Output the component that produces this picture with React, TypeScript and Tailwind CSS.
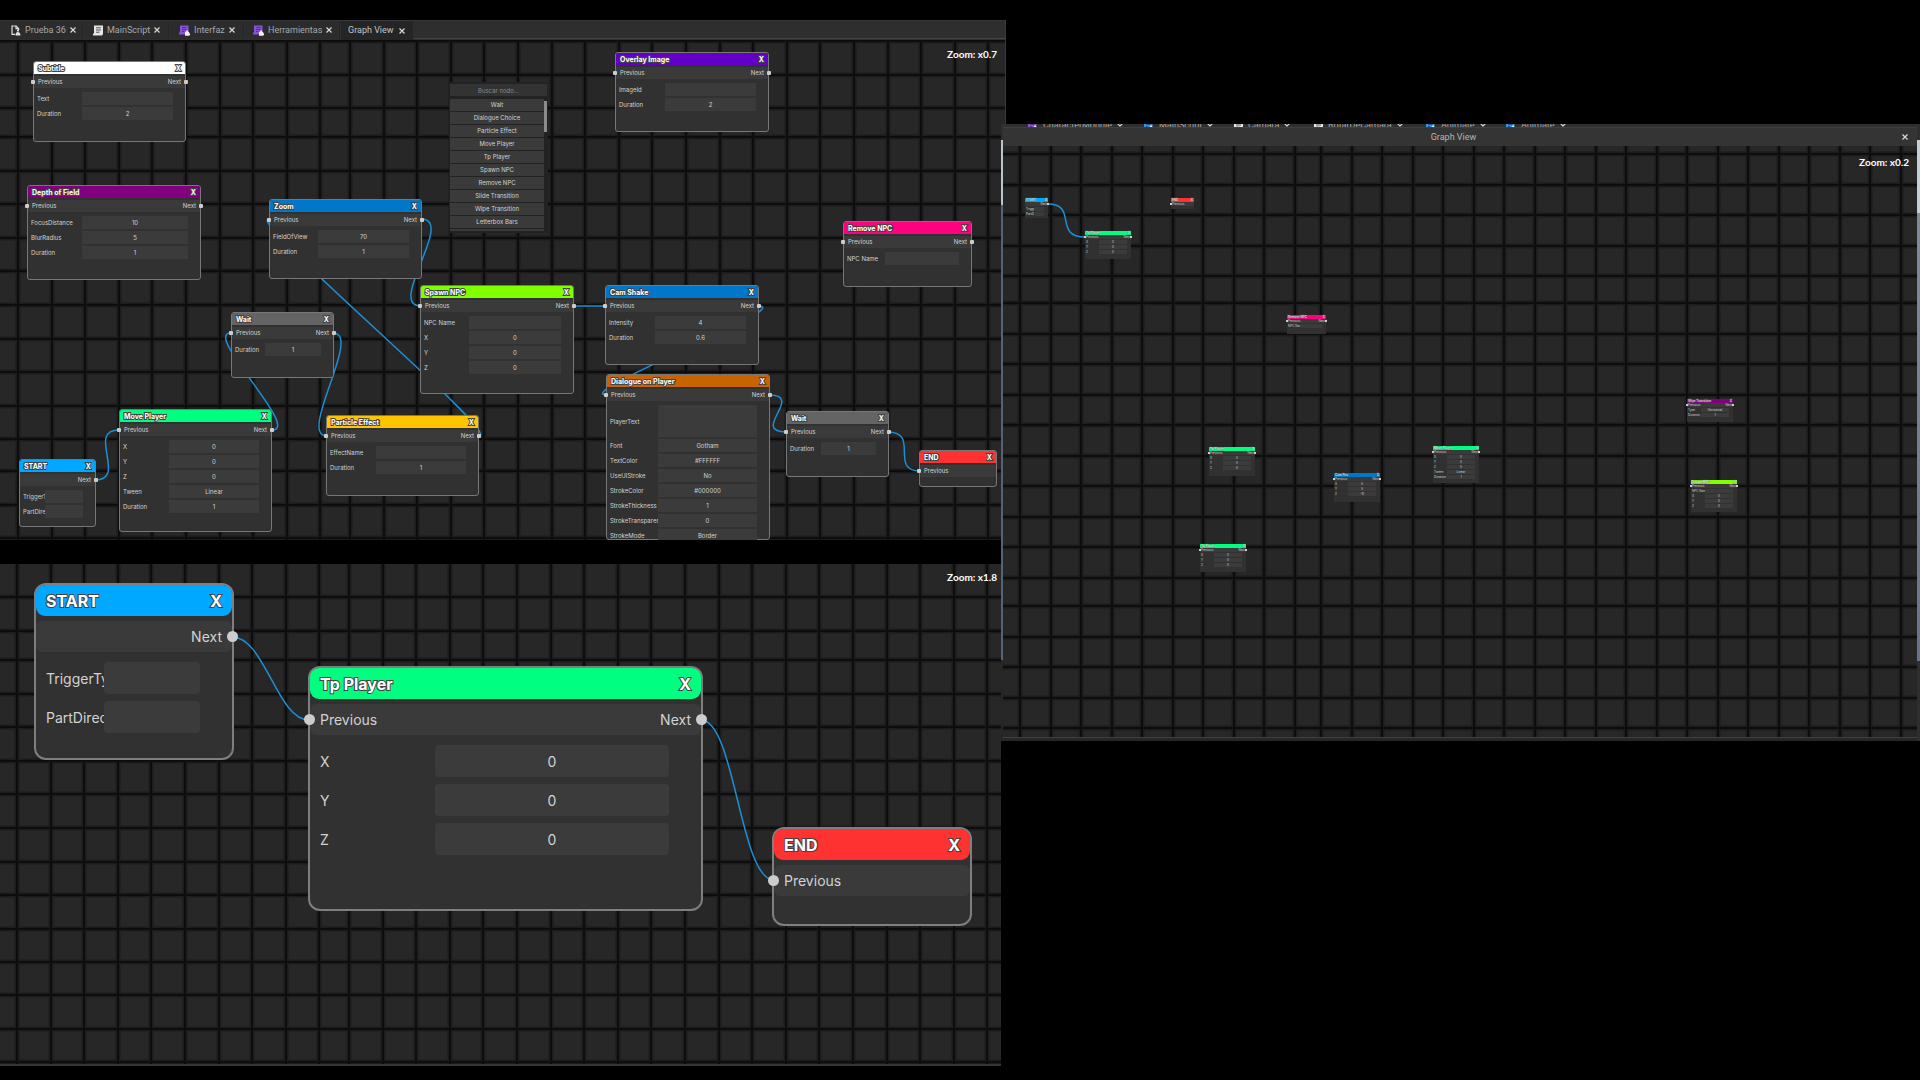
import React, { useId } from "react";

type Size = "xs" | "sm" | "lg";
type Field = { label: string; value?: string; tall?: boolean };
type NodeData = {
  title: string;
  color: string;
  x: number;
  y: number;
  w: number;
  h: number;
  labelW: number;
  prev?: boolean;
  next?: boolean;
  fields: Field[];
};
type Run = [start: number, pitch: number, count: number];

const styles = {
  xs: {
    node: "",
    header: "h-[4px] pl-px pr-px text-[3px] text-[#ffffffb0]",
    stroke: "[-webkit-text-stroke:1px_#55606066]",
    ports: "h-[4px] px-px text-[3px]",
    dot: "size-[2px] top-[1px]",
    dotL: "-left-px",
    dotR: "-right-px",
    fields: "mt-[1px] gap-[1px] pl-px pr-[4px] text-[3px]",
    row: "h-[4px]",
    tall: "h-[8px]",
    input: "",
  },
  sm: {
    node: "border border-[#777777] rounded-[3px]",
    header: "h-[12px] rounded-t-[2px] px-[4px] text-[7px] text-white",
    stroke: "[-webkit-text-stroke:2px_#444444]",
    ports: "mt-[2px] h-[12px] px-[4px] text-[6px]",
    dot: "size-[4px] top-[4px] rounded-[1px]",
    dotL: "-left-[3px]",
    dotR: "-right-[3px]",
    fields: "mt-[4px] gap-[2px] pl-[3px] pr-[12px] text-[6px]",
    row: "h-[13px]",
    tall: "h-[32px]",
    input: "",
  },
  lg: {
    node: "border-2 border-[#7f7f7f] rounded-[12px]",
    header: "h-[31px] rounded-[9px] px-[10px] text-[16px] text-white",
    stroke: "[-webkit-text-stroke:2px_#444444]",
    ports: "mt-[5px] h-[31px] rounded-[6px] px-[10px] text-[14px]",
    dot: "size-[11px] top-[10px] rounded-full",
    dotL: "-left-[6px]",
    dotR: "-right-[6px]",
    fields: "mt-[10px] gap-[7px] pl-[10px] pr-[32px] text-[14px]",
    row: "h-[32px]",
    tall: "h-[64px]",
    input: "rounded-[4px]",
  },
};

function GraphNode({ node, size }: { node: NodeData; size: Size }) {
  const s = styles[size];
  const id = useId();
  return (
    <article
      className={`absolute bg-[#313131] ${s.node}`}
      style={{ left: node.x, top: node.y, width: node.w, height: node.h }}
    >
      <header
        className={`flex items-center justify-between font-bold leading-none [paint-order:stroke_fill] ${s.header} ${s.stroke}`}
        style={{ backgroundColor: node.color }}
      >
        <h2 className="whitespace-nowrap">{node.title}</h2>
        <button type="button" aria-label={`Close ${node.title}`} className="leading-none">
          X
        </button>
      </header>
      <div className={`relative flex items-center justify-between bg-[#3a3a3a] leading-none text-[#d2d2d2] ${s.ports}`}>
        {node.prev && <span className={`absolute bg-[#cccccc] ${s.dot} ${s.dotL}`} />}
        <span>{node.prev ? "Previous" : ""}</span>
        <span>{node.next ? "Next" : ""}</span>
        {node.next && <span className={`absolute bg-[#cccccc] ${s.dot} ${s.dotR}`} />}
      </div>
      <div className={`flex flex-col leading-none text-[#d2d2d2] ${s.fields}`}>
        {node.fields.map((f) => (
          <div key={f.label} className={`flex items-center ${f.tall ? s.tall : s.row}`}>
            <label
              htmlFor={id + f.label}
              className="shrink-0 overflow-hidden whitespace-nowrap leading-normal"
              style={{ width: node.labelW }}
            >
              {f.label}
            </label>
            {f.tall ? (
              <textarea
                id={id + f.label}
                className={`h-full w-0 min-w-0 flex-1 resize-none bg-[#3b3b3b] ${s.input}`}
              />
            ) : (
              <input
                id={id + f.label}
                defaultValue={f.value}
                className={`h-full w-0 min-w-0 flex-1 bg-[#3b3b3b] text-center ${s.input}`}
              />
            )}
          </div>
        ))}
      </div>
    </article>
  );
}

function expand(runs: Run[]) {
  return runs.flatMap(([start, pitch, count]) =>
    Array.from({ length: count }, (_, i) => Math.round(start + pitch * i)),
  );
}

function Grid({ cols, rows, wires, wireWidth }: { cols: Run[]; rows: Run[]; wires: string[]; wireWidth: number }) {
  const lines = [
    ...expand(cols).map((x) => ({ key: `c${x}`, x1: x, x2: x, y1: "0", y2: "100%" })),
    ...expand(rows).map((y) => ({ key: `r${y}`, x1: "0", x2: "100%", y1: y, y2: y })),
  ];
  return (
    <svg className="absolute inset-0 size-full" aria-hidden="true">
      {lines.map(({ key, ...p }) => (
        <line key={key} {...p} stroke="#1c1c1c" strokeWidth={5} />
      ))}
      {lines.map(({ key, ...p }) => (
        <line key={key} {...p} stroke="#0d0d0d" strokeWidth={2} />
      ))}
      {wires.map((d) => (
        <path key={d} d={d} fill="none" stroke="#1b8fd6" strokeWidth={wireWidth} />
      ))}
    </svg>
  );
}

const xyz: Field[] = [
  { label: "X", value: "0" },
  { label: "Y", value: "0" },
  { label: "Z", value: "0" },
];
const duration = (value: string): Field => ({ label: "Duration", value });
const both = { prev: true, next: true };
const triggers: Field[] = [{ label: "TriggerType" }, { label: "PartDirectory" }];

const mainNodes: NodeData[] = [
  { title: "Subtitle", color: "#ffffff", x: 33, y: 21, w: 153, h: 81, labelW: 45, ...both, fields: [{ label: "Text" }, duration("2")] },
  { title: "Depth of Field", color: "#82007f", x: 27, y: 145, w: 174, h: 95, labelW: 51, ...both, fields: [{ label: "FocusDistance", value: "10" }, { label: "BlurRadius", value: "5" }, duration("1")] },
  { title: "Zoom", color: "#0077c8", x: 269, y: 159, w: 153, h: 80, labelW: 45, ...both, fields: [{ label: "FieldOfView", value: "70" }, duration("1")] },
  { title: "Overlay Image", color: "#6200c8", x: 615, y: 12, w: 154, h: 80, labelW: 46, ...both, fields: [{ label: "ImageId" }, duration("2")] },
  { title: "Remove NPC", color: "#ff007f", x: 843, y: 181, w: 129, h: 66, labelW: 38, ...both, fields: [{ label: "NPC Name" }] },
  { title: "Spawn NPC", color: "#80ff00", x: 420, y: 245, w: 154, h: 109, labelW: 45, ...both, fields: [{ label: "NPC Name" }, ...xyz] },
  { title: "Cam Shake", color: "#0077c8", x: 605, y: 245, w: 154, h: 80, labelW: 46, ...both, fields: [{ label: "Intensity", value: "4" }, duration("0.6")] },
  { title: "Wait", color: "#646464", x: 231, y: 272, w: 103, h: 66, labelW: 30, ...both, fields: [duration("1")] },
  { title: "Move Player", color: "#00ff80", x: 119, y: 369, w: 153, h: 123, labelW: 46, ...both, fields: [...xyz, { label: "Tween", value: "Linear" }, duration("1")] },
  { title: "Particle Effect", color: "#ffc400", x: 326, y: 375, w: 153, h: 81, labelW: 46, ...both, fields: [{ label: "EffectName" }, duration("1")] },
  { title: "START", color: "#00a8ff", x: 19, y: 419, w: 77, h: 68, labelW: 22, next: true, fields: triggers },
  { title: "Dialogue on Player", color: "#c86400", x: 606, y: 334, w: 164, h: 166, labelW: 48, ...both, fields: [
    { label: "PlayerText", tall: true },
    { label: "Font", value: "Gotham" },
    { label: "TextColor", value: "#FFFFFF" },
    { label: "UseUIStroke", value: "No" },
    { label: "StrokeColor", value: "#000000" },
    { label: "StrokeThickness", value: "1" },
    { label: "StrokeTransparency", value: "0" },
    { label: "StrokeMode", value: "Border" },
  ] },
  { title: "Wait", color: "#646464", x: 786, y: 371, w: 103, h: 66, labelW: 31, ...both, fields: [duration("1")] },
  { title: "END", color: "#ff3232", x: 919, y: 410, w: 78, h: 37, labelW: 22, prev: true, fields: [] },
];

const mainWires = [
  "M95 440C128 440 86 390 119 390",
  "M272 390C302 390 202 293 231 293",
  "M333 293C363 293 297 396 327 396",
  "M479 396C504 396 244 179 269 179",
  "M421 179C456 179 386 266 421 266",
  "M573 266H605",
  "M758 266C798 266 568 355 607 355",
  "M769 355C805 355 750 392 786 392",
  "M888 392C920 392 889 431 920 431",
];

const closeNodes: NodeData[] = [
  { title: "START", color: "#00a8ff", x: 34, y: 19, w: 200, h: 177, labelW: 58, next: true, fields: triggers },
  { title: "Tp Player", color: "#00ff80", x: 308, y: 102, w: 395, h: 245, labelW: 115, ...both, fields: xyz },
  { title: "END", color: "#ff3232", x: 772, y: 263, w: 200, h: 99, labelW: 58, prev: true, fields: [] },
];

const farNodes: NodeData[] = [
  { title: "START", color: "#00a8ff", x: 22, y: 52, w: 23, h: 20, labelW: 8, next: true, fields: triggers },
  { title: "Tp Player", color: "#00ff80", x: 82, y: 85, w: 46, h: 28, labelW: 13, ...both, fields: xyz },
  { title: "END", color: "#ff3232", x: 168, y: 52, w: 23, h: 11, labelW: 8, prev: true, fields: [] },
  { title: "Remove NPC", color: "#ff007f", x: 284, y: 169, w: 39, h: 19, labelW: 12, ...both, fields: [{ label: "NPC Name" }] },
  { title: "Tp Player", color: "#00ff80", x: 206, y: 301, w: 46, h: 29, labelW: 13, ...both, fields: xyz },
  { title: "Tp Player", color: "#00ff80", x: 197, y: 398, w: 46, h: 28, labelW: 13, ...both, fields: xyz },
  { title: "Cam Pos", color: "#0077c8", x: 331, y: 327, w: 46, h: 29, labelW: 13, ...both, fields: [{ label: "X", value: "0" }, { label: "Y", value: "5" }, { label: "Z", value: "-10" }] },
  { title: "Move Player", color: "#00ff80", x: 430, y: 300, w: 46, h: 37, labelW: 13, ...both, fields: [...xyz, { label: "Tween", value: "Linear" }, duration("1")] },
  { title: "Wipe Transition", color: "#82007f", x: 684, y: 253, w: 46, h: 23, labelW: 13, ...both, fields: [{ label: "Type", value: "Horizontal" }, duration("1")] },
  { title: "Spawn NPC", color: "#80ff00", x: 688, y: 334, w: 46, h: 32, labelW: 13, ...both, fields: [{ label: "NPC Name" }, ...xyz] },
];

type IconKind = "place" | "script" | "module" | "local";

function TabIcon({ kind }: { kind: IconKind }) {
  if (kind === "place")
    return (
      <svg viewBox="0 0 10 11" className="h-[11px] w-[10px] shrink-0" fill="none" stroke="#e0e0e0" strokeWidth="1.2">
        <path d="M4 9.4H1V1h4.2L7.6 3.4V5" />
        <path d="M5 1v2.6h2.4" />
        <path d="M4.5 10.5c0-3 1-3.6 2.3-3.6S9.3 7.5 9.5 10.5Z" fill="#e0e0e0" stroke="none" />
        <circle cx="6.9" cy="5.6" r="1.1" fill="#e0e0e0" stroke="none" />
      </svg>
    );
  if (kind === "script")
    return (
      <svg viewBox="0 0 10 11" className="h-[11px] w-[10px] shrink-0">
        <path d="M1 .5h9V8c0 1.500-.5 2.500-1.500 2.500H0V8.500h1Z" fill="#e6e6e6" />
        <path d="M3 2.800h5M3 5h5M3 7.200h3.500" stroke="#555" strokeWidth="1" />
      </svg>
    );
  const fill = kind === "module" ? "#8a52d8" : "#19a0f0";
  return (
    <svg viewBox="0 0 11 11" className="h-[11px] w-[11px] shrink-0">
      <path d="M1 .5h8.500V6L6 9.500H0v-2h1Z" fill={fill} />
      <path d="M3 2.500h4.500M3 4.500h4.500M3 6.500h2" stroke="#3b2566" strokeWidth=".7" />
      <path d="M6 7h1.200a1.100 1.100 0 1 1 2 0h1v1.500a1 1 0 1 1 0 1.600v.6H6Z" fill="#f2f2f2" />
    </svg>
  );
}

function CloseMark() {
  return (
    <svg viewBox="0 0 6 6" className="size-[6px]" stroke="#d8d8d8" strokeWidth="1.2">
      <path d="M.5.5l5 5M5.500.5l-5 5" />
    </svg>
  );
}

const tabs: { name: string; kind: IconKind; width: string }[] = [
  { name: "Prueba 36", kind: "place", width: "w-[83px] pl-[11px]" },
  { name: "MainScript", kind: "script", width: "w-[85px] pl-[9px]" },
  { name: "Interfaz", kind: "module", width: "w-[74px] pl-[9px]" },
  { name: "Herramientas", kind: "module", width: "w-[95px] pl-[8px]" },
];

const hiddenTabs: { name: string; kind: IconKind; width: string }[] = [
  { name: "CharacterModule", kind: "module", width: "w-[116px]" },
  { name: "MainScript", kind: "local", width: "w-[90px]" },
  { name: "Camara", kind: "script", width: "w-[80px]" },
  { name: "RotarDeCamara", kind: "script", width: "w-[112px]" },
  { name: "Animate", kind: "local", width: "w-[80px]" },
  { name: "Animate", kind: "local", width: "w-[80px]" },
];

const menuItems = ["Wait", "Dialogue Choice", "Particle Effect", "Move Player", "Tp Player", "Spawn NPC", "Remove NPC", "Slide Transition", "Wipe Transition", "Letterbox Bars"];

function NodeMenu() {
  return (
    <div className="absolute left-[449px] top-[42px] flex h-[151px] w-[99px] flex-col bg-[#222222] px-px pt-[2px] text-[6px] leading-none text-[#d2d2d2]">
      <input
        aria-label="Buscar nodo"
        placeholder="Buscar nodo..."
        className="h-[12px] w-full shrink-0 bg-[#333333] text-center placeholder:text-[#8a8a8a]"
      />
      <div className="mt-[3px] flex min-h-0 flex-1 overflow-hidden">
        <ul className="flex flex-1 flex-col gap-px">
          {menuItems.map((m) => (
            <li key={m}>
              <button type="button" className="block h-[12px] w-full bg-[#3a3a3a]">
                {m}
              </button>
            </li>
          ))}
          <li className="h-[2px] bg-[#3a3a3a]" />
        </ul>
        <div className="mt-[2px] h-[31px] w-[3px] bg-[#8c8c8c]" />
      </div>
    </div>
  );
}

function ZoomLabel({ children, className }: { children: React.ReactNode; className: string }) {
  return (
    <p className={`absolute font-['Lato',sans-serif] text-[10px] font-bold leading-3 text-white ${className}`}>
      {children}
    </p>
  );
}

export default function App() {
  return (
    <main className="grid min-h-screen grid-cols-[1001fr_919fr] overflow-hidden bg-black font-['Inter',sans-serif]">
      <div className="flex min-w-0 flex-col gap-[24px] pt-[20px]">
        <section className="-mr-[5px] border-r border-[#3a3a3a] bg-[#2e2e2e]">
          <nav className="flex h-[20px] items-stretch gap-px border-t border-[#383838] font-['Roboto',sans-serif] text-[9px] leading-none text-[#a8a8a8]">
            {tabs.map((t) => (
              <div key={t.name} className={`mb-px flex items-center gap-[4px] border-r border-[#262626] bg-[#2c2c2c] ${t.width}`}>
                <TabIcon kind={t.kind} />
                <button type="button" className="whitespace-nowrap">{t.name}</button>
                <button type="button" aria-label={`Close ${t.name}`}>
                  <CloseMark />
                </button>
              </div>
            ))}
            <div className="flex w-[72px] items-center gap-[5px] bg-[#252525] pl-[7px] text-[#c4c4c4]">
              <button type="button" className="whitespace-nowrap">Graph View</button>
              <button type="button" aria-label="Close Graph View">
                <CloseMark />
              </button>
            </div>
            <div className="mb-px flex-1 border-b border-[#444444]" />
          </nav>
          <div className="relative h-[500px] overflow-hidden bg-[#272727]">
            <Grid
              cols={[[18, 33.6, 10], [350, 33.6, 20]]}
              rows={[[1, 33.6, 3], [97, 33.6, 10], [431, 33.6, 3]]}
              wires={mainWires}
              wireWidth={1.5}
            />
            {mainNodes.map((n, i) => (
              <GraphNode key={i} node={n} size="sm" />
            ))}
            <NodeMenu />
            <ZoomLabel className="right-[8px] top-[8px]">Zoom: x0.7</ZoomLabel>
          </div>
        </section>

        <section className="border-b-2 border-[#363636]">
          <div className="relative h-[500px] overflow-hidden bg-[#272727]">
            <Grid
              cols={[[17, 33.6, 10], [349, 33.6, 20]]}
              rows={[[33, 33.6, 2], [96, 33.6, 10], [431, 33.6, 3]]}
              wires={["M232 73C265 73 277 156 309 156", "M701 156C735 156 740 316 774 316"]}
              wireWidth={1.5}
            />
            {closeNodes.map((n) => (
              <GraphNode key={n.title} node={n} size="lg" />
            ))}
            <ZoomLabel className="right-[4px] top-[7px]">Zoom: x1.8</ZoomLabel>
          </div>
        </section>
      </div>

      <div className="z-10 min-w-0 pt-[124px]">
        <section className="flex bg-[#262626]">
          <div className="flex w-[2px] flex-col">
            <div className="h-[16px] bg-[#2e2e2e]" />
            <div className="h-[65px] bg-[#b9c6cc]" />
            <div className="h-[455px] bg-[#55637a]" />
          </div>
          <div className="min-w-0 flex-1">
            <nav className="flex h-[3px] items-center overflow-hidden bg-[#2e2e2e] pl-[24px] font-['Roboto',sans-serif] text-[9px] leading-none text-[#a8a8a8]">
              {hiddenTabs.map((t, i) => (
                <div key={i} className={`flex shrink-0 items-center gap-[5px] ${t.width}`}>
                  <TabIcon kind={t.kind} />
                  <button type="button" className="whitespace-nowrap">{t.name}</button>
                  <CloseMark />
                </div>
              ))}
            </nav>
            <header className="relative flex h-[19px] items-center justify-center border-t border-[#3f3f3f] bg-[#343434] pl-0 pr-[13px] font-['Roboto',sans-serif] text-[9px] leading-none text-[#b4b4b4]">
              <h1>Graph View</h1>
              <button type="button" aria-label="Close window" className="absolute right-[9px] top-[6px]">
                <CloseMark />
              </button>
            </header>
            <div className="relative h-[591px] overflow-hidden bg-[#272727]">
              <Grid
                cols={[[17, 30.5, 10], [318, 30.5, 20]]}
                rows={[[8, 30.5, 5], [157, 30.5, 10], [460, 30.5, 5]]}
                wires={["M45 58C75 58 50 91 82 91"]}
                wireWidth={1.5}
              />
              {farNodes.map((n, i) => (
                <GraphNode key={i} node={n} size="xs" />
              ))}
              <ZoomLabel className="right-[8px] top-[10px]">Zoom: x0.2</ZoomLabel>
            </div>
            <div className="h-[4px] border-t border-[#404040] bg-[#262626]" />
          </div>
          <div className="flex w-[3px] flex-col">
            <div className="h-[16px] bg-[#2e2e2e]" />
            <div className="h-[73px] bg-[#c4d0d6]" />
            <div className="h-[448px] bg-linear-to-b from-[#7f8b9b] to-[#66758c]" />
            <div className="flex-1 bg-[#2e2e2e]" />
          </div>
        </section>
      </div>
    </main>
  );
}
